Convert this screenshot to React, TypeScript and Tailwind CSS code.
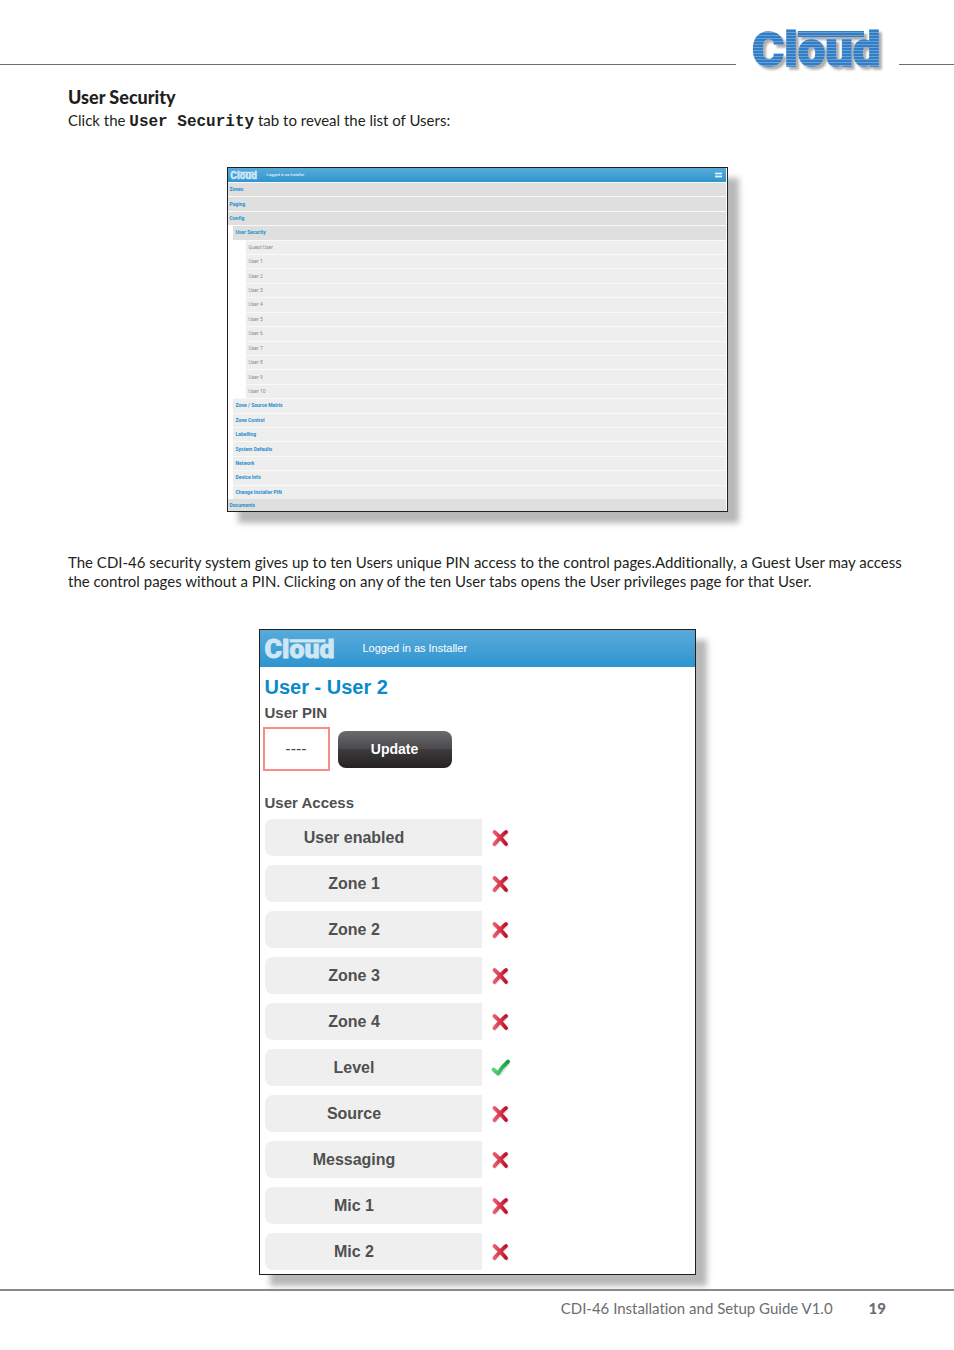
import React from "react";
import clsx from "clsx";

const menu = [
  { label: "Zones", level: 0 },
  { label: "Paging", level: 0 },
  { label: "Config", level: 0 },
  { label: "User Security", level: 1, active: true },
  { label: "Guest User", level: 2 },
  { label: "User 1", level: 2 },
  { label: "User 2", level: 2 },
  { label: "User 3", level: 2 },
  { label: "User 4", level: 2 },
  { label: "User 5", level: 2 },
  { label: "User 6", level: 2 },
  { label: "User 7", level: 2 },
  { label: "User 8", level: 2 },
  { label: "User 9", level: 2 },
  { label: "User 10", level: 2 },
  { label: "Zone / Source Matrix", level: 1 },
  { label: "Zone Control", level: 1 },
  { label: "Labelling", level: 1 },
  { label: "System Defaults", level: 1 },
  { label: "Network", level: 1 },
  { label: "Device Info", level: 1 },
  { label: "Change Installer PIN", level: 1 },
];

const access = [
  { label: "User enabled", allowed: false },
  { label: "Zone 1", allowed: false },
  { label: "Zone 2", allowed: false },
  { label: "Zone 3", allowed: false },
  { label: "Zone 4", allowed: false },
  { label: "Level", allowed: true },
  { label: "Source", allowed: false },
  { label: "Messaging", allowed: false },
  { label: "Mic 1", allowed: false },
  { label: "Mic 2", allowed: false },
];

const Wordmark = ({ fill }: { fill: string }) => (
  <>
    <text
      x="0"
      y="36"
      fontFamily="Roboto"
      fontWeight="900"
      fontSize="49"
      fill={fill}
      stroke={fill}
      strokeWidth="1.500"
    >
      Cloud
    </text>
    <rect x="46" y="1" width="66" height="6" fill={fill} />
  </>
);

const PageLogo = () => (
  <svg
    className="mt-4 h-16 w-[163px] shrink-0"
    viewBox="0 0 163 64"
    role="img"
    aria-label="Cloud"
  >
    <defs>
      <pattern
        id="stripes"
        width="4"
        height="3"
        patternUnits="userSpaceOnUse"
      >
        <rect width="4" height="3" fill="#6f9fce" />
        <rect width="4" height="2" fill="#2e7fcb" />
      </pattern>
      <filter id="soft" x="-10%" y="-10%" width="130%" height="140%">
        <feDropShadow
          dx="3"
          dy="3"
          stdDeviation="1.2"
          floodColor="#777"
          floodOpacity="0.6"
        />
      </filter>
    </defs>
    <g transform="translate(16 14)" filter="url(#soft)">
      <Wordmark fill="url(#stripes)" />
    </g>
  </svg>
);

const BarLogo = ({ className }: { className: string }) => (
  <svg
    className={className}
    viewBox="-1 -12 134 62"
    role="img"
    aria-label="Cloud"
  >
    <Wordmark fill="#cfe7f5" />
  </svg>
);

const Cross = () => (
  <svg className="size-5 [grid-area:1/1]" viewBox="0 0 20 20" fill="none">
    <defs>
      <linearGradient id="red" x1="0" y1="0" x2="1" y2="0">
        <stop offset="0" stopColor="#ea5a6c" />
        <stop offset="1" stopColor="#c01228" />
      </linearGradient>
    </defs>
    <path
      d="M5 5 17 17M17 5 5 17"
      stroke="#e0e0e0"
      strokeWidth="3.500"
      strokeLinecap="round"
    />
    <path
      d="M4.500 4C8 7 12 11 16 16M16 4C12 7 8 12 4.500 16"
      stroke="url(#red)"
      strokeWidth="3.800"
      strokeLinecap="round"
    />
  </svg>
);

const Tick = () => (
  <svg className="size-5 [grid-area:1/1]" viewBox="0 0 20 20" fill="none">
    <defs>
      <linearGradient id="green" x1="0" y1="0" x2="1" y2="0">
        <stop offset="0" stopColor="#5fd07f" />
        <stop offset="1" stopColor="#12a040" />
      </linearGradient>
    </defs>
    <path
      d="M4 13 9 17 19 5"
      stroke="#e0e0e0"
      strokeWidth="3"
      strokeLinecap="round"
      strokeLinejoin="round"
    />
    <path
      d="M3.500 11.500 8 15.500C10 12 14 7 18 3.500"
      stroke="url(#green)"
      strokeWidth="3.800"
      strokeLinecap="round"
      strokeLinejoin="round"
    />
  </svg>
);

const UserList = () => {
  return (
    <div className="mx-auto w-full max-w-[501px] border border-[#231f20] bg-white pr-px font-['Roboto',sans-serif] text-[5px] leading-none shadow-[11px_11px_6px_#b9b8b8]">
      <div className="flex h-[14px] items-center bg-linear-to-b from-[#58aada] to-[#2d95cf] pr-1 pl-0.5 text-white">
        <BarLogo className="h-[13px] w-7" />
        <p className="ml-[9px] text-[4px]">Logged in as Installer</p>
        <button aria-label="Menu" className="ml-auto">
          <svg className="h-[6px] w-[7px]" viewBox="0 0 7 6">
            <rect width="7" height="6" fill="#7fbfe3" />
            <path d="M0 1.500h7M0 4.500h7" stroke="#e4f2fa" />
          </svg>
        </button>
      </div>
      <nav>
        <ul className="grid h-[317px] auto-rows-fr">
          {menu.map((item) => (
            <li
              key={item.label}
              className={clsx(
                "flex border-t border-[#f9f9f9]",
                item.level === 0 && "bg-[#dfdfdf] pl-0.5",
                item.level === 1 && "ml-[5px] pl-[3px]",
                item.level === 1 && (item.active ? "bg-[#dfdfdf]" : "bg-[#eee]"),
                item.level === 2 && "ml-[18px] bg-[#eee] pl-[3px]",
              )}
            >
              <a
                href="#"
                className={clsx(
                  "flex flex-1 items-center",
                  item.level === 2 ? "text-[#888]" : "font-bold text-[#1f8fcd]",
                )}
              >
                {item.label}
              </a>
            </li>
          ))}
        </ul>
        <a
          href="#"
          className="flex h-3 items-center bg-[#dfdfdf] pl-0.5 font-bold text-[#1f8fcd]"
        >
          Documents
        </a>
      </nav>
    </div>
  );
};

const UserPrivileges = () => {
  return (
    <div className="mx-auto w-full max-w-[437px] border border-[#231f20] bg-white pb-1 font-['Liberation_Sans',sans-serif] text-[#505050] shadow-[11px_11px_6px_#b9b8b8]">
      <div className="flex h-[37px] items-center bg-linear-to-b from-[#58aada] to-[#2d95cf] pl-1 text-white">
        <BarLogo className="h-[34px] w-[73px]" />
        <p className="ml-[26px] text-[11px]">Logged in as Installer</p>
      </div>
      <h2 className="mt-2 pl-[5px] text-[20px] leading-6 font-bold text-[#0a8acb]">
        User - User 2
      </h2>
      <label
        htmlFor="pin"
        className="mt-1 block pl-[5px] text-[15px] leading-5 font-bold"
      >
        User PIN
      </label>
      <div className="mt-1 flex items-center gap-2 pl-[3px]">
        <input
          id="pin"
          type="text"
          defaultValue="----"
          className="h-[44px] w-[67px] border-2 border-[#f98b8b] bg-white text-center text-[16px] outline-none"
        />
        <button className="h-[37px] w-[114px] rounded-lg bg-[linear-gradient(#6b6b6d,#49484a_50%,#3d3b3d_50%,#242122)] text-[14px] font-bold text-white">
          Update
        </button>
      </div>
      <h3 className="mt-[22px] pl-[5px] text-[15px] leading-5 font-bold">
        User Access
      </h3>
      <ul className="mt-[6px] flex flex-col gap-[9px] pl-[5px]">
        {access.map((row) => (
          <li key={row.label}>
            <label className="flex items-center gap-2">
              <span className="flex h-[37px] w-[217px] items-center justify-center rounded-l-lg bg-[#efefef] pr-[38px] text-[16px] font-bold">
                {row.label}
              </span>
              <span className="grid">
                <input
                  type="checkbox"
                  defaultChecked={row.allowed}
                  className="size-5 appearance-none [grid-area:1/1]"
                />
                {row.allowed ? <Tick /> : <Cross />}
              </span>
            </label>
          </li>
        ))}
      </ul>
    </div>
  );
};

const App = () => {
  return (
    <div className="bg-white font-['Lato',sans-serif] text-[15px] leading-[19px] text-[#231f20] [font-variant-ligatures:none]">
      <header className="flex items-start">
        <div className="mt-16 h-px flex-1 bg-[#6d6e71]" />
        <PageLogo />
        <div className="mt-16 h-px w-[55px] bg-[#6d6e71]" />
      </header>

      <main className="px-[68px] pt-2">
        <h1 className="text-[18px] font-black">User Security</h1>
        <p className="mt-1">
          Click the{" "}
          <b className="font-['Liberation_Mono',monospace] text-[16px]">
            User Security
          </b>{" "}
          tab to reveal the list of Users:
        </p>
        <div className="mt-[35px]">
          <UserList />
        </div>
        <p className="-mr-7 mt-[41px]">
          The CDI-46 security system gives up to ten Users unique PIN access to
          the control pages.Additionally, a Guest User may access the control
          pages without a PIN. Clicking on any of the ten User tabs opens the
          User privileges page for that User.
        </p>
        <div className="mt-[38px]">
          <UserPrivileges />
        </div>
      </main>

      <footer className="mt-[14px] flex justify-end gap-9 border-t-2 border-[#88878a] px-[68px] pt-2 pb-8 text-[#6d6e71]">
        <p>CDI-46 Installation and Setup Guide V1.0</p>
        <p className="font-black">19</p>
      </footer>
    </div>
  );
};

export default App;
